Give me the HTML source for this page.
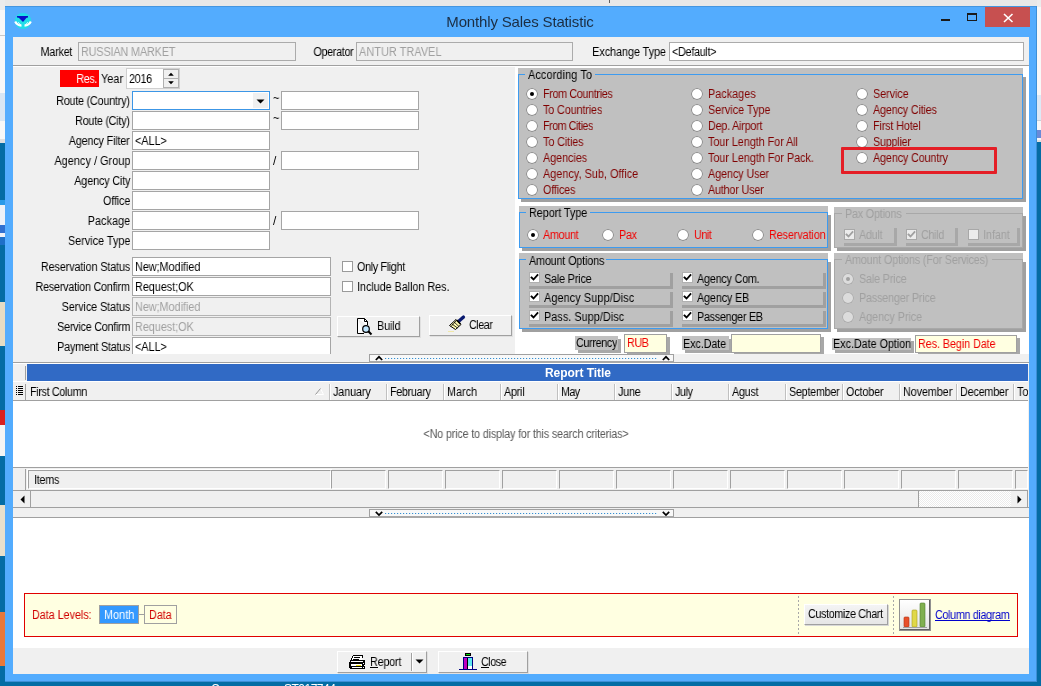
<!DOCTYPE html>
<html><head><meta charset="utf-8"><style>
html,body{margin:0;padding:0;width:1041px;height:686px;overflow:hidden;position:relative;background:#046ca4}
.a{position:absolute;box-sizing:border-box}
.t{position:absolute;white-space:pre;font-family:"Liberation Sans",sans-serif;will-change:transform}
svg.a{overflow:visible}
</style></head><body>
<div class="a" style="left:0;top:0;width:1041px;height:686px;background:#046ca4"></div>
<div class="a" style="left:0px;top:0px;width:1041px;height:6px;background:#e8e8e8;"></div>
<div class="a" style="left:609px;top:0px;width:1px;height:3px;background:#606060;"></div>
<div class="a" style="left:0px;top:0px;width:5px;height:10px;background:#ececec;"></div>
<div class="a" style="left:0px;top:10px;width:5px;height:26px;background:#f8f8f8;"></div>
<div class="a" style="left:0px;top:35px;width:5px;height:1px;background:#c8c8c8;"></div>
<div class="a" style="left:0px;top:36px;width:5px;height:57px;background:#f8f8f8;"></div>
<div class="a" style="left:0px;top:93px;width:5px;height:28px;background:#d8e6f4;"></div>
<div class="a" style="left:0px;top:121px;width:5px;height:19px;background:#f8f8f8;"></div>
<div class="a" style="left:0px;top:139px;width:5px;height:4px;background:#e0e0e0;"></div>
<div class="a" style="left:0px;top:200px;width:5px;height:5px;background:#2a9ae8;"></div>
<div class="a" style="left:0px;top:205px;width:5px;height:32px;background:#eef2f8;"></div>
<div class="a" style="left:0px;top:225px;width:5px;height:8px;background:#3070d0;"></div>
<div class="a" style="left:0px;top:237px;width:5px;height:8px;background:#1e70c8;"></div>
<div class="a" style="left:0px;top:302px;width:5px;height:44px;background:#e6dcc4;"></div>
<div class="a" style="left:0px;top:410px;width:5px;height:15px;background:#d82020;"></div>
<div class="a" style="left:0px;top:425px;width:5px;height:31px;background:#f4f4f4;"></div>
<div class="a" style="left:0px;top:505px;width:5px;height:51px;background:#e8e0cc;"></div>
<div class="a" style="left:0px;top:612px;width:5px;height:54px;background:#e8783a;"></div>
<div class="a" style="left:1037px;top:0px;width:4px;height:7px;background:#ececec;"></div>
<div class="a" style="left:1037px;top:7px;width:4px;height:135px;background:#f8f8f8;"></div>
<div class="a" style="left:1037px;top:95px;width:4px;height:25px;background:#dde9f5;"></div>
<div class="a" style="left:1037px;top:120px;width:4px;height:1px;background:#c8d0d8;"></div>
<div class="a" style="left:1037px;top:130px;width:4px;height:8px;background:#6a8ad8;"></div>
<div class="a" style="left:1037px;top:140px;width:4px;height:2px;background:#e0e0e0;"></div>
<div class="a" style="left:5px;top:6px;width:1032px;height:676px;background:#53acfe;"></div>
<div class="a" style="left:5px;top:681px;width:1032px;height:1px;background:#3d8fd6;"></div>
<div class="a" style="left:5px;top:6px;width:1032px;height:1px;background:#4496e0;"></div>
<div class="a" style="left:1036px;top:6px;width:1px;height:676px;background:#3d8fd6;"></div>
<div class="a" style="left:13px;top:37px;width:1016px;height:637px;background:#f0f0f0;"></div>
<svg class="a" style="left:10px;top:8px" width="26" height="26" viewBox="0 0 26 26">
<ellipse cx="13" cy="13" rx="8.2" ry="8" fill="#22dde8"/>
<path d="M8 14 L11 17 M18 14 L15 17" stroke="#b8f2ff" stroke-width="1"/>
<path d="M5.2 13.5 Q7 17.3 11.5 17.6 M20.8 13.5 Q19 17.3 14.5 17.6" stroke="#fff" stroke-width="2.2" fill="none"/>
<polygon points="7,8 18,8 13,14" fill="#0a12c8"/>
<rect x="7" y="8" width="11" height="1.6" fill="#0a12c8"/>
</svg>
<div class="t" style="top:13px;font-size:15px;line-height:18px;color:#1b2d42;letter-spacing:-0.154px;left:220px;width:600px;text-align:center;">Monthly Sales Statistic</div>
<div class="a" style="left:941px;top:19px;width:9px;height:2px;background:#1a1a1a;"></div>
<div class="a" style="left:967px;top:13px;width:10px;height:8px;box-sizing:border-box;border:1px solid #1a1a1a;border-top-width:2px"></div>
<div class="a" style="left:985px;top:7px;width:45px;height:20px;background:#c75050;"></div>
<svg class="a" style="left:1003px;top:13px" width="11" height="10" viewBox="0 0 11 10"><path d="M1 1 L9.5 9 M9.5 1 L1 9" stroke="#fff" stroke-width="1.6"/></svg>
<div class="t" style="top:46px;font-size:12px;line-height:13px;color:#000;letter-spacing:-0.246px;right:969px;transform:scaleX(0.9);transform-origin:100% 0;">Market</div>
<div class="a" style="left:78px;top:42px;width:218px;height:19px;background:#f0f0f0;border:1px solid #ababab;"></div>
<div class="t" style="top:46px;font-size:12px;line-height:13px;color:#a0a0a0;letter-spacing:-0.138px;left:81px;transform:scaleX(0.9);transform-origin:0 0;">RUSSIAN MARKET</div>
<div class="t" style="top:46px;font-size:12px;line-height:13px;color:#000;letter-spacing:-0.385px;right:688px;transform:scaleX(0.9);transform-origin:100% 0;">Operator</div>
<div class="a" style="left:356px;top:42px;width:217px;height:19px;background:#f0f0f0;border:1px solid #ababab;"></div>
<div class="t" style="top:46px;font-size:12px;line-height:13px;color:#a0a0a0;letter-spacing:0.131px;left:359px;transform:scaleX(0.9);transform-origin:0 0;">ANTUR TRAVEL</div>
<div class="t" style="top:46px;font-size:12px;line-height:13px;color:#000;letter-spacing:-0.046px;right:375px;transform:scaleX(0.9);transform-origin:100% 0;">Exchange Type</div>
<div class="a" style="left:669px;top:42px;width:355px;height:19px;background:#fff;border:1px solid #ababab;"></div>
<div class="t" style="top:46px;font-size:12px;line-height:13px;color:#000;letter-spacing:-0.323px;left:672px;transform:scaleX(0.9);transform-origin:0 0;">&lt;Default&gt;</div>
<div class="a" style="left:13px;top:65px;width:1016px;height:1px;background:#a0a0a0;"></div>
<div class="a" style="left:13px;top:66px;width:1016px;height:1px;background:#ffffff;"></div>
<div class="a" style="left:515px;top:67px;width:514px;height:287px;background:#ffffff;"></div>
<div class="a" style="left:60px;top:70px;width:39px;height:17px;background:#ff0000;"></div>
<div class="t" style="top:73px;font-size:12px;line-height:13px;color:#fff;letter-spacing:-0.428px;right:944px;transform:scaleX(0.9);transform-origin:100% 0;">Res.</div>
<div class="t" style="top:73px;font-size:12px;line-height:13px;color:#000;letter-spacing:0.065px;left:101px;transform:scaleX(0.9);transform-origin:0 0;">Year</div>
<div class="a" style="left:126px;top:68px;width:54px;height:21px;background:#fff;border:1px solid #d0d0d0;"></div>
<div class="t" style="top:73px;font-size:12px;line-height:13px;color:#000;letter-spacing:-0.303px;left:129px;transform:scaleX(0.9);transform-origin:0 0;">2016</div>
<div class="a" style="left:163px;top:69px;width:16px;height:10px;background:#f0f0f0;border:1px solid #b0b0b0;"></div>
<div class="a" style="left:163px;top:78px;width:16px;height:10px;background:#f0f0f0;border:1px solid #b0b0b0;"></div>
<svg class="a" style="left:163px;top:69px" width="16" height="19" viewBox="0 0 17 19"><path d="M5.5 6.5 L8.5 3.5 L11.5 6.5 Z M5.5 12.5 L8.5 15.5 L11.5 12.5 Z" fill="#000"/></svg>
<div class="t" style="top:95px;font-size:12px;line-height:13px;color:#000;letter-spacing:-0.249px;right:911px;transform:scaleX(0.9);transform-origin:100% 0;">Route (Country)</div>
<div class="a" style="left:132px;top:91px;width:138px;height:19px;background:#fff;border:1px solid #3c96e6;"></div>
<div class="a" style="left:253px;top:93px;width:15px;height:15px;background:#f0f0f0;"></div>
<svg class="a" style="left:256px;top:99px" width="9" height="6" viewBox="0 0 9 6"><path d="M0.5 0.5 L8.5 0.5 L4.5 4.5 Z" fill="#000"/></svg>
<div class="t" style="top:92px;font-size:12px;line-height:13px;color:#000;letter-spacing:0.000px;left:273px;transform:scaleX(0.9);transform-origin:0 0;">~</div>
<div class="a" style="left:281px;top:91px;width:138px;height:19px;background:#fff;border:1px solid #a5a5a5;"></div>
<div class="t" style="top:115px;font-size:12px;line-height:13px;color:#000;letter-spacing:-0.284px;right:911px;transform:scaleX(0.9);transform-origin:100% 0;">Route (City)</div>
<div class="a" style="left:132px;top:111px;width:138px;height:19px;background:#fff;border:1px solid #a5a5a5;"></div>
<div class="t" style="top:112px;font-size:12px;line-height:13px;color:#000;letter-spacing:0.000px;left:273px;transform:scaleX(0.9);transform-origin:0 0;">~</div>
<div class="a" style="left:281px;top:111px;width:138px;height:19px;background:#fff;border:1px solid #a5a5a5;"></div>
<div class="t" style="top:135px;font-size:12px;line-height:13px;color:#000;letter-spacing:-0.188px;right:911px;transform:scaleX(0.9);transform-origin:100% 0;">Agency Filter</div>
<div class="a" style="left:132px;top:131px;width:138px;height:19px;background:#fff;border:1px solid #a5a5a5;"></div>
<div class="t" style="top:155px;font-size:12px;line-height:13px;color:#000;letter-spacing:0.074px;right:911px;transform:scaleX(0.9);transform-origin:100% 0;">Agency / Group</div>
<div class="a" style="left:132px;top:151px;width:138px;height:19px;background:#fff;border:1px solid #a5a5a5;"></div>
<div class="t" style="top:155px;font-size:12px;line-height:13px;color:#000;letter-spacing:0.000px;left:273px;transform:scaleX(0.9);transform-origin:0 0;">/</div>
<div class="a" style="left:281px;top:151px;width:138px;height:19px;background:#fff;border:1px solid #a5a5a5;"></div>
<div class="t" style="top:175px;font-size:12px;line-height:13px;color:#000;letter-spacing:-0.147px;right:911px;transform:scaleX(0.9);transform-origin:100% 0;">Agency City</div>
<div class="a" style="left:132px;top:171px;width:138px;height:19px;background:#fff;border:1px solid #a5a5a5;"></div>
<div class="t" style="top:195px;font-size:12px;line-height:13px;color:#000;letter-spacing:-0.157px;right:911px;transform:scaleX(0.9);transform-origin:100% 0;">Office</div>
<div class="a" style="left:132px;top:191px;width:138px;height:19px;background:#fff;border:1px solid #a5a5a5;"></div>
<div class="t" style="top:215px;font-size:12px;line-height:13px;color:#000;letter-spacing:0.088px;right:911px;transform:scaleX(0.9);transform-origin:100% 0;">Package</div>
<div class="a" style="left:132px;top:211px;width:138px;height:19px;background:#fff;border:1px solid #a5a5a5;"></div>
<div class="t" style="top:215px;font-size:12px;line-height:13px;color:#000;letter-spacing:0.000px;left:273px;transform:scaleX(0.9);transform-origin:0 0;">/</div>
<div class="a" style="left:281px;top:211px;width:138px;height:19px;background:#fff;border:1px solid #a5a5a5;"></div>
<div class="t" style="top:235px;font-size:12px;line-height:13px;color:#000;letter-spacing:0.028px;right:911px;transform:scaleX(0.9);transform-origin:100% 0;">Service Type</div>
<div class="a" style="left:132px;top:231px;width:138px;height:19px;background:#fff;border:1px solid #a5a5a5;"></div>
<div class="t" style="top:135px;font-size:12px;line-height:13px;color:#000;letter-spacing:0.000px;left:135px;transform:scaleX(0.9);transform-origin:0 0;">&lt;ALL&gt;</div>
<div class="t" style="top:261px;font-size:12px;line-height:13px;color:#000;letter-spacing:-0.121px;right:911px;transform:scaleX(0.9);transform-origin:100% 0;">Reservation Status</div>
<div class="a" style="left:132px;top:257px;width:199px;height:19px;background:#fff;border:1px solid #a5a5a5;"></div>
<div class="t" style="top:261px;font-size:12px;line-height:13px;color:#000;letter-spacing:0.000px;left:135px;transform:scaleX(0.9);transform-origin:0 0;">New;Modified</div>
<div class="t" style="top:281px;font-size:12px;line-height:13px;color:#000;letter-spacing:-0.243px;right:911px;transform:scaleX(0.9);transform-origin:100% 0;">Reservation Confirm</div>
<div class="a" style="left:132px;top:277px;width:199px;height:19px;background:#fff;border:1px solid #a5a5a5;"></div>
<div class="t" style="top:281px;font-size:12px;line-height:13px;color:#000;letter-spacing:0.000px;left:135px;transform:scaleX(0.9);transform-origin:0 0;">Request;OK</div>
<div class="t" style="top:301px;font-size:12px;line-height:13px;color:#000;letter-spacing:-0.088px;right:911px;transform:scaleX(0.9);transform-origin:100% 0;">Service Status</div>
<div class="a" style="left:132px;top:297px;width:199px;height:19px;background:#f0f0f0;border:1px solid #b4b4b4;"></div>
<div class="t" style="top:301px;font-size:12px;line-height:13px;color:#a0a0a0;letter-spacing:0.000px;left:135px;transform:scaleX(0.9);transform-origin:0 0;">New;Modified</div>
<div class="t" style="top:321px;font-size:12px;line-height:13px;color:#000;letter-spacing:-0.272px;right:911px;transform:scaleX(0.9);transform-origin:100% 0;">Service Confirm</div>
<div class="a" style="left:132px;top:317px;width:199px;height:19px;background:#f0f0f0;border:1px solid #b4b4b4;"></div>
<div class="t" style="top:321px;font-size:12px;line-height:13px;color:#a0a0a0;letter-spacing:0.000px;left:135px;transform:scaleX(0.9);transform-origin:0 0;">Request;OK</div>
<div class="t" style="top:341px;font-size:12px;line-height:13px;color:#000;letter-spacing:-0.243px;right:911px;transform:scaleX(0.9);transform-origin:100% 0;">Payment Status</div>
<div class="a" style="left:132px;top:337px;width:199px;height:19px;background:#fff;border:1px solid #a5a5a5;"></div>
<div class="t" style="top:341px;font-size:12px;line-height:13px;color:#000;letter-spacing:0.000px;left:135px;transform:scaleX(0.9);transform-origin:0 0;">&lt;ALL&gt;</div>
<div class="a" style="left:13px;top:354px;width:502px;height:8px;background:#f0f0f0;"></div>
<div class="a" style="left:342px;top:261px;width:11px;height:11px;background:#fff;box-sizing:border-box;border:1px solid #9a9a9a"></div>
<div class="t" style="top:261px;font-size:12px;line-height:13px;color:#000;letter-spacing:-0.385px;left:357px;transform:scaleX(0.9);transform-origin:0 0;">Only Flight</div>
<div class="a" style="left:342px;top:281px;width:11px;height:11px;background:#fff;box-sizing:border-box;border:1px solid #9a9a9a"></div>
<div class="t" style="top:281px;font-size:12px;line-height:13px;color:#000;letter-spacing:-0.037px;left:357px;transform:scaleX(0.9);transform-origin:0 0;">Include Ballon Res.</div>
<div class="a" style="left:337px;top:316px;width:83px;height:21px;box-sizing:border-box;background:#f0f0f0;border-top:1px solid #fff;border-left:1px solid #fff;border-right:1px solid #a0a0a0;border-bottom:1px solid #a0a0a0;box-shadow:1px 1px 0 #e0e0e0"></div>
<div class="a" style="left:429px;top:315px;width:83px;height:21px;box-sizing:border-box;background:#f0f0f0;border-top:1px solid #fff;border-left:1px solid #fff;border-right:1px solid #a0a0a0;border-bottom:1px solid #a0a0a0;box-shadow:1px 1px 0 #e0e0e0"></div>
<svg class="a" style="left:356px;top:317px" width="18" height="19" viewBox="0 0 18 19">
<path d="M1.5 1.5 L8.5 1.5 L11.5 4.5 L11.5 8 M1.5 1.5 L1.5 16.5 L8 16.5" stroke="#000" fill="#fff" stroke-width="1"/>
<path d="M8.5 1.5 L8.5 4.5 L11.5 4.5" stroke="#000" fill="none"/>
<circle cx="10" cy="12" r="3.3" fill="#bfe6ff" stroke="#000" stroke-width="1.2"/>
<path d="M12.3 14.3 L15.5 17.5" stroke="#000" stroke-width="2"/>
</svg>
<div class="t" style="top:320px;font-size:12px;line-height:13px;color:#000;letter-spacing:-0.114px;left:377px;transform:scaleX(0.9);transform-origin:0 0;">Build</div>
<svg class="a" style="left:447px;top:316px" width="19" height="17" viewBox="0 0 19 17">
<path d="M12 5 L16.5 1" stroke="#0a1a70" stroke-width="3.2" stroke-linecap="round"/>
<path d="M9 3.5 L14 8.5 L8.5 13.5 L2.5 9.5 Z" fill="#fffbb0" stroke="#000" stroke-width="1"/>
<path d="M5 8 L10.5 12 M7 6 L12 10.5 M4 10.5 L9 5" stroke="#000" stroke-width="0.8"/>
<path d="M9.5 4 L13.5 8" stroke="#000" stroke-width="1.6"/>
<path d="M1.5 15.5 L7 15.5" stroke="#f0e060" stroke-width="1" stroke-dasharray="1 1"/>
</svg>
<div class="t" style="top:319px;font-size:12px;line-height:13px;color:#000;letter-spacing:-0.573px;left:469px;transform:scaleX(0.9);transform-origin:0 0;">Clear</div>
<div class="a" style="left:13px;top:362px;width:1016px;height:1px;background:#a0a0a0;"></div>
<div class="a" style="left:13px;top:363px;width:1016px;height:1px;background:#ffffff;"></div>
<div class="a" style="left:369px;top:354px;width:305px;height:9px;box-sizing:border-box;background:#f8f8f8;border-top:1px solid #a0a0a0;border-left:1px solid #a0a0a0;border-right:1px solid #a0a0a0;border-bottom:2px solid #a8a8a8"></div>
<svg class="a" style="left:375px;top:356px" width="8" height="5" viewBox="0 0 8 5"><path d="M0.8 4 L4 0.8 L7.2 4" stroke="#000" stroke-width="1.7" fill="none"/></svg>
<svg class="a" style="left:662px;top:356px" width="8" height="5" viewBox="0 0 8 5"><path d="M0.8 4 L4 0.8 L7.2 4" stroke="#000" stroke-width="1.7" fill="none"/></svg>
<div class="a" style="left:385px;top:358px;width:272px;height:1px;background-image:repeating-linear-gradient(90deg,#3c88d0 0 1px,#c8f0f8 1px 2px,transparent 2px 3px)"></div>
<div class="a" style="left:521px;top:77px;width:505px;height:125px;background:#a0a0a0;"></div>
<div class="a" style="left:518px;top:68px;width:505px;height:131px;background:#c0c0c0;"></div>
<div class="a" style="left:518px;top:74px;width:505px;height:1px;background:#3d9bf0;"></div>
<div class="a" style="left:518px;top:74px;width:1px;height:125px;background:#3d9bf0;"></div>
<div class="a" style="left:1022px;top:74px;width:1px;height:125px;background:#3d9bf0;"></div>
<div class="a" style="left:518px;top:198px;width:505px;height:1px;background:#3d9bf0;"></div>
<div class="a" style="left:525px;top:74px;width:70px;height:1px;background:#c0c0c0;"></div>
<div class="t" style="top:69px;font-size:12px;line-height:13px;color:#000;letter-spacing:0.179px;left:528px;transform:scaleX(0.9);transform-origin:0 0;">According To</div>
<div class="a" style="left:526px;top:88px;width:12px;height:12px;border-radius:50%;background:#fff;box-shadow:inset 0 0 0 1px #8c8c8c;"></div>
<div class="a" style="left:530px;top:92px;width:4px;height:4px;border-radius:50%;background:#000"></div>
<div class="t" style="top:88px;font-size:12px;line-height:13px;color:#800000;letter-spacing:-0.403px;left:543px;transform:scaleX(0.9);transform-origin:0 0;">From Countries</div>
<div class="a" style="left:526px;top:104px;width:12px;height:12px;border-radius:50%;background:#fff;box-shadow:inset 0 0 0 1px #8c8c8c;"></div>
<div class="t" style="top:104px;font-size:12px;line-height:13px;color:#800000;letter-spacing:-0.134px;left:543px;transform:scaleX(0.9);transform-origin:0 0;">To Countries</div>
<div class="a" style="left:526px;top:120px;width:12px;height:12px;border-radius:50%;background:#fff;box-shadow:inset 0 0 0 1px #8c8c8c;"></div>
<div class="t" style="top:120px;font-size:12px;line-height:13px;color:#800000;letter-spacing:-0.545px;left:543px;transform:scaleX(0.9);transform-origin:0 0;">From Cities</div>
<div class="a" style="left:526px;top:136px;width:12px;height:12px;border-radius:50%;background:#fff;box-shadow:inset 0 0 0 1px #8c8c8c;"></div>
<div class="t" style="top:136px;font-size:12px;line-height:13px;color:#800000;letter-spacing:-0.113px;left:543px;transform:scaleX(0.9);transform-origin:0 0;">To Cities</div>
<div class="a" style="left:526px;top:152px;width:12px;height:12px;border-radius:50%;background:#fff;box-shadow:inset 0 0 0 1px #8c8c8c;"></div>
<div class="t" style="top:152px;font-size:12px;line-height:13px;color:#800000;letter-spacing:-0.052px;left:543px;transform:scaleX(0.9);transform-origin:0 0;">Agencies</div>
<div class="a" style="left:526px;top:168px;width:12px;height:12px;border-radius:50%;background:#fff;box-shadow:inset 0 0 0 1px #8c8c8c;"></div>
<div class="t" style="top:168px;font-size:12px;line-height:13px;color:#800000;letter-spacing:0.047px;left:543px;transform:scaleX(0.9);transform-origin:0 0;">Agency, Sub, Office</div>
<div class="a" style="left:526px;top:184px;width:12px;height:12px;border-radius:50%;background:#fff;box-shadow:inset 0 0 0 1px #8c8c8c;"></div>
<div class="t" style="top:184px;font-size:12px;line-height:13px;color:#800000;letter-spacing:-0.169px;left:543px;transform:scaleX(0.9);transform-origin:0 0;">Offices</div>
<div class="a" style="left:691px;top:88px;width:12px;height:12px;border-radius:50%;background:#fff;box-shadow:inset 0 0 0 1px #8c8c8c;"></div>
<div class="t" style="top:88px;font-size:12px;line-height:13px;color:#800000;letter-spacing:0.027px;left:708px;transform:scaleX(0.9);transform-origin:0 0;">Packages</div>
<div class="a" style="left:691px;top:104px;width:12px;height:12px;border-radius:50%;background:#fff;box-shadow:inset 0 0 0 1px #8c8c8c;"></div>
<div class="t" style="top:104px;font-size:12px;line-height:13px;color:#800000;letter-spacing:0.028px;left:708px;transform:scaleX(0.9);transform-origin:0 0;">Service Type</div>
<div class="a" style="left:691px;top:120px;width:12px;height:12px;border-radius:50%;background:#fff;box-shadow:inset 0 0 0 1px #8c8c8c;"></div>
<div class="t" style="top:120px;font-size:12px;line-height:13px;color:#800000;letter-spacing:-0.255px;left:708px;transform:scaleX(0.9);transform-origin:0 0;">Dep. Airport</div>
<div class="a" style="left:691px;top:136px;width:12px;height:12px;border-radius:50%;background:#fff;box-shadow:inset 0 0 0 1px #8c8c8c;"></div>
<div class="t" style="top:136px;font-size:12px;line-height:13px;color:#800000;letter-spacing:-0.040px;left:708px;transform:scaleX(0.9);transform-origin:0 0;">Tour Length For All</div>
<div class="a" style="left:691px;top:152px;width:12px;height:12px;border-radius:50%;background:#fff;box-shadow:inset 0 0 0 1px #8c8c8c;"></div>
<div class="t" style="top:152px;font-size:12px;line-height:13px;color:#800000;letter-spacing:-0.025px;left:708px;transform:scaleX(0.9);transform-origin:0 0;">Tour Length For Pack.</div>
<div class="a" style="left:691px;top:168px;width:12px;height:12px;border-radius:50%;background:#fff;box-shadow:inset 0 0 0 1px #8c8c8c;"></div>
<div class="t" style="top:168px;font-size:12px;line-height:13px;color:#800000;letter-spacing:-0.092px;left:708px;transform:scaleX(0.9);transform-origin:0 0;">Agency User</div>
<div class="a" style="left:691px;top:184px;width:12px;height:12px;border-radius:50%;background:#fff;box-shadow:inset 0 0 0 1px #8c8c8c;"></div>
<div class="t" style="top:184px;font-size:12px;line-height:13px;color:#800000;letter-spacing:-0.214px;left:708px;transform:scaleX(0.9);transform-origin:0 0;">Author User</div>
<div class="a" style="left:856px;top:88px;width:12px;height:12px;border-radius:50%;background:#fff;box-shadow:inset 0 0 0 1px #8c8c8c;"></div>
<div class="t" style="top:88px;font-size:12px;line-height:13px;color:#800000;letter-spacing:-0.057px;left:873px;transform:scaleX(0.9);transform-origin:0 0;">Service</div>
<div class="a" style="left:856px;top:104px;width:12px;height:12px;border-radius:50%;background:#fff;box-shadow:inset 0 0 0 1px #8c8c8c;"></div>
<div class="t" style="top:104px;font-size:12px;line-height:13px;color:#800000;letter-spacing:-0.197px;left:873px;transform:scaleX(0.9);transform-origin:0 0;">Agency Cities</div>
<div class="a" style="left:856px;top:120px;width:12px;height:12px;border-radius:50%;background:#fff;box-shadow:inset 0 0 0 1px #8c8c8c;"></div>
<div class="t" style="top:120px;font-size:12px;line-height:13px;color:#800000;letter-spacing:-0.167px;left:873px;transform:scaleX(0.9);transform-origin:0 0;">First Hotel</div>
<div class="a" style="left:856px;top:136px;width:12px;height:12px;border-radius:50%;background:#fff;box-shadow:inset 0 0 0 1px #8c8c8c;"></div>
<div class="t" style="top:136px;font-size:12px;line-height:13px;color:#800000;letter-spacing:-0.258px;left:873px;transform:scaleX(0.9);transform-origin:0 0;">Supplier</div>
<div class="a" style="left:856px;top:152px;width:12px;height:12px;border-radius:50%;background:#fff;box-shadow:inset 0 0 0 1px #8c8c8c;"></div>
<div class="t" style="top:152px;font-size:12px;line-height:13px;color:#800000;letter-spacing:-0.157px;left:873px;transform:scaleX(0.9);transform-origin:0 0;">Agency Country</div>
<div class="a" style="left:841px;top:147px;width:156px;height:27px;box-sizing:border-box;border:3px solid #e41e26;border-radius:1px"></div>
<div class="a" style="left:522px;top:215px;width:309px;height:36px;background:#a0a0a0;"></div>
<div class="a" style="left:519px;top:206px;width:309px;height:42px;background:#c0c0c0;"></div>
<div class="a" style="left:519px;top:212px;width:309px;height:1px;background:#3d9bf0;"></div>
<div class="a" style="left:519px;top:212px;width:1px;height:36px;background:#3d9bf0;"></div>
<div class="a" style="left:827px;top:212px;width:1px;height:36px;background:#3d9bf0;"></div>
<div class="a" style="left:519px;top:247px;width:309px;height:1px;background:#3d9bf0;"></div>
<div class="a" style="left:526px;top:212px;width:64px;height:1px;background:#c0c0c0;"></div>
<div class="t" style="top:207px;font-size:12px;line-height:13px;color:#000;letter-spacing:-0.042px;left:529px;transform:scaleX(0.9);transform-origin:0 0;">Report Type</div>
<div class="a" style="left:527px;top:229px;width:12px;height:12px;border-radius:50%;background:#fff;box-shadow:inset 0 0 0 1px #8c8c8c;"></div>
<div class="a" style="left:531px;top:233px;width:4px;height:4px;border-radius:50%;background:#000"></div>
<div class="t" style="top:229px;font-size:12px;line-height:13px;color:#f00000;letter-spacing:-0.349px;left:543px;transform:scaleX(0.9);transform-origin:0 0;">Amount</div>
<div class="a" style="left:602px;top:229px;width:12px;height:12px;border-radius:50%;background:#fff;box-shadow:inset 0 0 0 1px #8c8c8c;"></div>
<div class="t" style="top:229px;font-size:12px;line-height:13px;color:#f00000;letter-spacing:-0.339px;left:619px;transform:scaleX(0.9);transform-origin:0 0;">Pax</div>
<div class="a" style="left:677px;top:229px;width:12px;height:12px;border-radius:50%;background:#fff;box-shadow:inset 0 0 0 1px #8c8c8c;"></div>
<div class="t" style="top:229px;font-size:12px;line-height:13px;color:#f00000;letter-spacing:-0.483px;left:694px;transform:scaleX(0.9);transform-origin:0 0;">Unit</div>
<div class="a" style="left:752px;top:229px;width:12px;height:12px;border-radius:50%;background:#fff;box-shadow:inset 0 0 0 1px #8c8c8c;"></div>
<div class="t" style="top:229px;font-size:12px;line-height:13px;color:#f00000;letter-spacing:-0.114px;left:769px;transform:scaleX(0.9);transform-origin:0 0;">Reservation</div>
<div class="a" style="left:837px;top:216px;width:189px;height:35px;background:#a0a0a0;"></div>
<div class="a" style="left:834px;top:207px;width:189px;height:41px;background:#c0c0c0;"></div>
<div class="a" style="left:834px;top:213px;width:189px;height:1px;background:#a8a8a8;"></div>
<div class="a" style="left:834px;top:213px;width:1px;height:35px;background:#a8a8a8;"></div>
<div class="a" style="left:1022px;top:213px;width:1px;height:35px;background:#a8a8a8;"></div>
<div class="a" style="left:834px;top:247px;width:189px;height:1px;background:#a8a8a8;"></div>
<div class="a" style="left:842px;top:213px;width:64px;height:1px;background:#c0c0c0;"></div>
<div class="t" style="top:208px;font-size:12px;line-height:13px;color:#a0a0a0;letter-spacing:-0.237px;left:845px;transform:scaleX(0.9);transform-origin:0 0;">Pax Options</div>
<div class="a" style="left:844px;top:243px;width:53px;height:3px;background:#a8a8a8;"></div>
<div class="a" style="left:894px;top:228px;width:3px;height:18px;background:#a8a8a8;"></div>
<div class="a" style="left:844px;top:229px;width:11px;height:11px;background:#ececec;box-sizing:border-box;border:1px solid #a8a8a8"></div>
<svg class="a" style="left:844px;top:229px" width="11" height="11" viewBox="0 0 11 11"><path d="M2.5 5.5 L4.5 7.5 L8.5 3" stroke="#a0a0a0" stroke-width="1.8" fill="none" stroke-linecap="square"/></svg>
<div class="t" style="top:229px;font-size:12px;line-height:13px;color:#a0a0a0;letter-spacing:-0.338px;left:859px;transform:scaleX(0.9);transform-origin:0 0;">Adult</div>
<div class="a" style="left:906px;top:243px;width:52px;height:3px;background:#a8a8a8;"></div>
<div class="a" style="left:955px;top:228px;width:3px;height:18px;background:#a8a8a8;"></div>
<div class="a" style="left:906px;top:229px;width:11px;height:11px;background:#ececec;box-sizing:border-box;border:1px solid #a8a8a8"></div>
<svg class="a" style="left:906px;top:229px" width="11" height="11" viewBox="0 0 11 11"><path d="M2.5 5.5 L4.5 7.5 L8.5 3" stroke="#a0a0a0" stroke-width="1.8" fill="none" stroke-linecap="square"/></svg>
<div class="t" style="top:229px;font-size:12px;line-height:13px;color:#a0a0a0;letter-spacing:-0.362px;left:921px;transform:scaleX(0.9);transform-origin:0 0;">Child</div>
<div class="a" style="left:968px;top:243px;width:52px;height:3px;background:#a8a8a8;"></div>
<div class="a" style="left:1017px;top:228px;width:3px;height:18px;background:#a8a8a8;"></div>
<div class="a" style="left:968px;top:229px;width:11px;height:11px;background:#ececec;box-sizing:border-box;border:1px solid #a8a8a8"></div>
<div class="t" style="top:229px;font-size:12px;line-height:13px;color:#a0a0a0;letter-spacing:-0.049px;left:983px;transform:scaleX(0.9);transform-origin:0 0;">Infant</div>
<div class="a" style="left:522px;top:262px;width:309px;height:70px;background:#a0a0a0;"></div>
<div class="a" style="left:519px;top:253px;width:309px;height:76px;background:#c0c0c0;"></div>
<div class="a" style="left:519px;top:259px;width:309px;height:1px;background:#3d9bf0;"></div>
<div class="a" style="left:519px;top:259px;width:1px;height:70px;background:#3d9bf0;"></div>
<div class="a" style="left:827px;top:259px;width:1px;height:70px;background:#3d9bf0;"></div>
<div class="a" style="left:519px;top:328px;width:309px;height:1px;background:#3d9bf0;"></div>
<div class="a" style="left:526px;top:259px;width:80px;height:1px;background:#c0c0c0;"></div>
<div class="t" style="top:255px;font-size:12px;line-height:13px;color:#000;letter-spacing:-0.183px;left:529px;transform:scaleX(0.9);transform-origin:0 0;">Amount Options</div>
<div class="a" style="left:529px;top:286px;width:144px;height:3px;background:#a0a0a0;"></div>
<div class="a" style="left:670px;top:273px;width:3px;height:16px;background:#a0a0a0;"></div>
<div class="a" style="left:529px;top:272px;width:11px;height:11px;background:#fff;box-sizing:border-box;border:1px solid #b0b0b0"></div>
<svg class="a" style="left:529px;top:272px" width="11" height="11" viewBox="0 0 11 11"><path d="M2.5 5.5 L4.5 7.5 L8.5 3" stroke="#000" stroke-width="1.8" fill="none" stroke-linecap="square"/></svg>
<div class="t" style="top:273px;font-size:12px;line-height:13px;color:#000;letter-spacing:-0.199px;left:544px;transform:scaleX(0.9);transform-origin:0 0;">Sale Price</div>
<div class="a" style="left:529px;top:305px;width:144px;height:3px;background:#a0a0a0;"></div>
<div class="a" style="left:670px;top:292px;width:3px;height:16px;background:#a0a0a0;"></div>
<div class="a" style="left:529px;top:291px;width:11px;height:11px;background:#fff;box-sizing:border-box;border:1px solid #b0b0b0"></div>
<svg class="a" style="left:529px;top:291px" width="11" height="11" viewBox="0 0 11 11"><path d="M2.5 5.5 L4.5 7.5 L8.5 3" stroke="#000" stroke-width="1.8" fill="none" stroke-linecap="square"/></svg>
<div class="t" style="top:292px;font-size:12px;line-height:13px;color:#000;letter-spacing:0.145px;left:544px;transform:scaleX(0.9);transform-origin:0 0;">Agency Supp/Disc</div>
<div class="a" style="left:529px;top:324px;width:144px;height:3px;background:#a0a0a0;"></div>
<div class="a" style="left:670px;top:311px;width:3px;height:16px;background:#a0a0a0;"></div>
<div class="a" style="left:529px;top:310px;width:11px;height:11px;background:#fff;box-sizing:border-box;border:1px solid #b0b0b0"></div>
<svg class="a" style="left:529px;top:310px" width="11" height="11" viewBox="0 0 11 11"><path d="M2.5 5.5 L4.5 7.5 L8.5 3" stroke="#000" stroke-width="1.8" fill="none" stroke-linecap="square"/></svg>
<div class="t" style="top:311px;font-size:12px;line-height:13px;color:#000;letter-spacing:0.069px;left:544px;transform:scaleX(0.9);transform-origin:0 0;">Pass. Supp/Disc</div>
<div class="a" style="left:682px;top:286px;width:144px;height:3px;background:#a0a0a0;"></div>
<div class="a" style="left:823px;top:273px;width:3px;height:16px;background:#a0a0a0;"></div>
<div class="a" style="left:682px;top:272px;width:11px;height:11px;background:#fff;box-sizing:border-box;border:1px solid #b0b0b0"></div>
<svg class="a" style="left:682px;top:272px" width="11" height="11" viewBox="0 0 11 11"><path d="M2.5 5.5 L4.5 7.5 L8.5 3" stroke="#000" stroke-width="1.8" fill="none" stroke-linecap="square"/></svg>
<div class="t" style="top:273px;font-size:12px;line-height:13px;color:#000;letter-spacing:-0.236px;left:697px;transform:scaleX(0.9);transform-origin:0 0;">Agency Com.</div>
<div class="a" style="left:682px;top:305px;width:144px;height:3px;background:#a0a0a0;"></div>
<div class="a" style="left:823px;top:292px;width:3px;height:16px;background:#a0a0a0;"></div>
<div class="a" style="left:682px;top:291px;width:11px;height:11px;background:#fff;box-sizing:border-box;border:1px solid #b0b0b0"></div>
<svg class="a" style="left:682px;top:291px" width="11" height="11" viewBox="0 0 11 11"><path d="M2.5 5.5 L4.5 7.5 L8.5 3" stroke="#000" stroke-width="1.8" fill="none" stroke-linecap="square"/></svg>
<div class="t" style="top:292px;font-size:12px;line-height:13px;color:#000;letter-spacing:-0.157px;left:697px;transform:scaleX(0.9);transform-origin:0 0;">Agency EB</div>
<div class="a" style="left:682px;top:324px;width:144px;height:3px;background:#a0a0a0;"></div>
<div class="a" style="left:823px;top:311px;width:3px;height:16px;background:#a0a0a0;"></div>
<div class="a" style="left:682px;top:310px;width:11px;height:11px;background:#fff;box-sizing:border-box;border:1px solid #b0b0b0"></div>
<svg class="a" style="left:682px;top:310px" width="11" height="11" viewBox="0 0 11 11"><path d="M2.5 5.5 L4.5 7.5 L8.5 3" stroke="#000" stroke-width="1.8" fill="none" stroke-linecap="square"/></svg>
<div class="t" style="top:311px;font-size:12px;line-height:13px;color:#000;letter-spacing:-0.307px;left:697px;transform:scaleX(0.9);transform-origin:0 0;">Passenger EB</div>
<div class="a" style="left:837px;top:262px;width:189px;height:70px;background:#a0a0a0;"></div>
<div class="a" style="left:834px;top:253px;width:189px;height:76px;background:#c0c0c0;"></div>
<div class="a" style="left:834px;top:259px;width:189px;height:1px;background:#a8a8a8;"></div>
<div class="a" style="left:834px;top:259px;width:1px;height:70px;background:#a8a8a8;"></div>
<div class="a" style="left:1022px;top:259px;width:1px;height:70px;background:#a8a8a8;"></div>
<div class="a" style="left:834px;top:328px;width:189px;height:1px;background:#a8a8a8;"></div>
<div class="a" style="left:842px;top:259px;width:150px;height:1px;background:#c0c0c0;"></div>
<div class="t" style="top:254px;font-size:12px;line-height:13px;color:#a0a0a0;letter-spacing:-0.192px;left:845px;transform:scaleX(0.9);transform-origin:0 0;">Amount Options (For Services)</div>
<div class="a" style="left:842px;top:273px;width:12px;height:12px;border-radius:50%;background:#dcdcdc;box-shadow:inset 0 0 0 1px #acacac;"></div>
<div class="a" style="left:846px;top:277px;width:4px;height:4px;border-radius:50%;background:#a0a0a0"></div>
<div class="t" style="top:273px;font-size:12px;line-height:13px;color:#a0a0a0;letter-spacing:-0.199px;left:859px;transform:scaleX(0.9);transform-origin:0 0;">Sale Price</div>
<div class="a" style="left:842px;top:292px;width:12px;height:12px;border-radius:50%;background:#dcdcdc;box-shadow:inset 0 0 0 1px #acacac;"></div>
<div class="t" style="top:292px;font-size:12px;line-height:13px;color:#a0a0a0;letter-spacing:-0.201px;left:859px;transform:scaleX(0.9);transform-origin:0 0;">Passenger Price</div>
<div class="a" style="left:842px;top:311px;width:12px;height:12px;border-radius:50%;background:#dcdcdc;box-shadow:inset 0 0 0 1px #acacac;"></div>
<div class="t" style="top:311px;font-size:12px;line-height:13px;color:#a0a0a0;letter-spacing:-0.053px;left:859px;transform:scaleX(0.9);transform-origin:0 0;">Agency Price</div>
<div class="a" style="left:578px;top:339px;width:43px;height:14px;background:#a8a8a8;"></div>
<div class="a" style="left:575px;top:336px;width:43px;height:14px;background:#c0c0c0;"></div>
<div class="t" style="top:337px;font-size:12px;line-height:13px;color:#000;letter-spacing:-0.399px;left:576px;transform:scaleX(0.9);transform-origin:0 0;">Currency</div>
<div class="a" style="left:627px;top:337px;width:43px;height:17px;background:#a8a8a8;"></div>
<div class="a" style="left:624px;top:334px;width:43px;height:19px;background:#ffffe1;border:1px solid #a0a0a0;"></div>
<div class="t" style="top:337px;font-size:12px;line-height:13px;color:#f00000;letter-spacing:-0.499px;left:627px;transform:scaleX(0.9);transform-origin:0 0;">RUB</div>
<div class="a" style="left:685px;top:339px;width:47px;height:14px;background:#a8a8a8;"></div>
<div class="a" style="left:682px;top:336px;width:47px;height:14px;background:#c0c0c0;"></div>
<div class="t" style="top:338px;font-size:12px;line-height:13px;color:#000;letter-spacing:-0.097px;left:683px;transform:scaleX(0.9);transform-origin:0 0;">Exc.Date</div>
<div class="a" style="left:734px;top:337px;width:90px;height:17px;background:#a8a8a8;"></div>
<div class="a" style="left:731px;top:334px;width:90px;height:19px;background:#ffffe1;border:1px solid #a0a0a0;"></div>
<div class="a" style="left:835px;top:341px;width:79px;height:12px;background:#a8a8a8;"></div>
<div class="a" style="left:832px;top:338px;width:79px;height:12px;background:#c0c0c0;"></div>
<div class="t" style="top:338px;font-size:12px;line-height:13px;color:#000;letter-spacing:-0.042px;left:833px;transform:scaleX(0.9);transform-origin:0 0;">Exc.Date Option</div>
<div class="a" style="left:918px;top:338px;width:102px;height:16px;background:#a8a8a8;"></div>
<div class="a" style="left:915px;top:335px;width:102px;height:18px;background:#ffffe1;border:1px solid #a0a0a0;"></div>
<div class="t" style="top:338px;font-size:12px;line-height:13px;color:#f00000;letter-spacing:-0.082px;left:918px;transform:scaleX(0.9);transform-origin:0 0;">Res. Begin Date</div>
<div class="a" style="left:13px;top:364px;width:1015px;height:17px;background:#f0f0f0;"></div>
<div class="a" style="left:27px;top:364px;width:1001px;height:17px;background:#316ac5;"></div>
<div class="a" style="left:25px;top:366px;width:1px;height:14px;background:#a0a0a0;"></div>
<div class="t" style="top:366px;font-size:12px;line-height:14px;color:#fff;letter-spacing:-0.034px;font-weight:bold;left:278px;width:600px;text-align:center;">Report Title</div>
<div class="a" style="left:13px;top:381px;width:1015px;height:1px;background:#ffffff;"></div>
<div class="a" style="left:13px;top:382px;width:1015px;height:18px;background:#f0f0f0;"></div>
<div class="a" style="left:13px;top:400px;width:1015px;height:1px;background:#a0a0a0;"></div>
<div class="a" style="left:25px;top:384px;width:1px;height:16px;background:#a0a0a0;"></div>
<svg class="a" style="left:16px;top:386px" width="8" height="11" viewBox="0 0 8 11"><path d="M0 0.5 H1 M0 2.5 H1 M0 4.5 H1 M0 6.5 H1 M0 8.5 H1 M2 0.5 H7 M2 2.5 H7 M2 4.5 H7 M2 6.5 H7 M2 8.5 H7" stroke="#000" stroke-width="1"/></svg>
<div class="t" style="top:386px;font-size:12px;line-height:13px;color:#000;letter-spacing:-0.394px;left:30px;transform:scaleX(0.9);transform-origin:0 0;">First Column</div>
<svg class="a" style="left:315px;top:388px" width="9" height="8" viewBox="0 0 9 8"><path d="M5.5 0.5 L8.5 6.5 L0.5 6.5 Z" fill="none" stroke="#fff" stroke-width="1"/><path d="M5.5 0.5 L0.5 6.5" stroke="#909090" stroke-width="1"/></svg>
<div class="a" style="left:329px;top:384px;width:1px;height:16px;background:#c0c0c0;"></div>
<div class="a" style="left:330px;top:384px;width:1px;height:16px;background:#ffffff;"></div>
<div class="t" style="top:386px;font-size:12px;line-height:13px;color:#000;letter-spacing:-0.134px;left:333px;transform:scaleX(0.9);transform-origin:0 0;">January</div>
<div class="a" style="left:386px;top:384px;width:1px;height:16px;background:#c0c0c0;"></div>
<div class="a" style="left:387px;top:384px;width:1px;height:16px;background:#ffffff;"></div>
<div class="t" style="top:386px;font-size:12px;line-height:13px;color:#000;letter-spacing:-0.352px;left:390px;transform:scaleX(0.9);transform-origin:0 0;">February</div>
<div class="a" style="left:443px;top:384px;width:1px;height:16px;background:#c0c0c0;"></div>
<div class="a" style="left:444px;top:384px;width:1px;height:16px;background:#ffffff;"></div>
<div class="t" style="top:386px;font-size:12px;line-height:13px;color:#000;letter-spacing:0.028px;left:447px;transform:scaleX(0.9);transform-origin:0 0;">March</div>
<div class="a" style="left:500px;top:384px;width:1px;height:16px;background:#c0c0c0;"></div>
<div class="a" style="left:501px;top:384px;width:1px;height:16px;background:#ffffff;"></div>
<div class="t" style="top:386px;font-size:12px;line-height:13px;color:#000;letter-spacing:-0.279px;left:504px;transform:scaleX(0.9);transform-origin:0 0;">April</div>
<div class="a" style="left:557px;top:384px;width:1px;height:16px;background:#c0c0c0;"></div>
<div class="a" style="left:558px;top:384px;width:1px;height:16px;background:#ffffff;"></div>
<div class="t" style="top:386px;font-size:12px;line-height:13px;color:#000;letter-spacing:-0.668px;left:561px;transform:scaleX(0.9);transform-origin:0 0;">May</div>
<div class="a" style="left:614px;top:384px;width:1px;height:16px;background:#c0c0c0;"></div>
<div class="a" style="left:615px;top:384px;width:1px;height:16px;background:#ffffff;"></div>
<div class="t" style="top:386px;font-size:12px;line-height:13px;color:#000;letter-spacing:-0.264px;left:618px;transform:scaleX(0.9);transform-origin:0 0;">June</div>
<div class="a" style="left:671px;top:384px;width:1px;height:16px;background:#c0c0c0;"></div>
<div class="a" style="left:672px;top:384px;width:1px;height:16px;background:#ffffff;"></div>
<div class="t" style="top:386px;font-size:12px;line-height:13px;color:#000;letter-spacing:-0.447px;left:675px;transform:scaleX(0.9);transform-origin:0 0;">July</div>
<div class="a" style="left:728px;top:384px;width:1px;height:16px;background:#c0c0c0;"></div>
<div class="a" style="left:729px;top:384px;width:1px;height:16px;background:#ffffff;"></div>
<div class="t" style="top:386px;font-size:12px;line-height:13px;color:#000;letter-spacing:-0.282px;left:732px;transform:scaleX(0.9);transform-origin:0 0;">Agust</div>
<div class="a" style="left:785px;top:384px;width:1px;height:16px;background:#c0c0c0;"></div>
<div class="a" style="left:786px;top:384px;width:1px;height:16px;background:#ffffff;"></div>
<div class="t" style="top:386px;font-size:12px;line-height:13px;color:#000;letter-spacing:-0.296px;left:789px;transform:scaleX(0.9);transform-origin:0 0;">September</div>
<div class="a" style="left:842px;top:384px;width:1px;height:16px;background:#c0c0c0;"></div>
<div class="a" style="left:843px;top:384px;width:1px;height:16px;background:#ffffff;"></div>
<div class="t" style="top:386px;font-size:12px;line-height:13px;color:#000;letter-spacing:-0.152px;left:846px;transform:scaleX(0.9);transform-origin:0 0;">October</div>
<div class="a" style="left:899px;top:384px;width:1px;height:16px;background:#c0c0c0;"></div>
<div class="a" style="left:900px;top:384px;width:1px;height:16px;background:#ffffff;"></div>
<div class="t" style="top:386px;font-size:12px;line-height:13px;color:#000;letter-spacing:-0.099px;left:903px;transform:scaleX(0.9);transform-origin:0 0;">November</div>
<div class="a" style="left:956px;top:384px;width:1px;height:16px;background:#c0c0c0;"></div>
<div class="a" style="left:957px;top:384px;width:1px;height:16px;background:#ffffff;"></div>
<div class="t" style="top:386px;font-size:12px;line-height:13px;color:#000;letter-spacing:-0.226px;left:960px;transform:scaleX(0.9);transform-origin:0 0;">December</div>
<div class="a" style="left:1013px;top:384px;width:1px;height:16px;background:#c0c0c0;"></div>
<div class="a" style="left:1014px;top:384px;width:1px;height:16px;background:#ffffff;"></div>
<div class="t" style="top:386px;font-size:12px;line-height:13px;color:#000;letter-spacing:0.000px;left:1017px;transform:scaleX(0.9);transform-origin:0 0;">To</div>
<div class="a" style="left:1028px;top:364px;width:1px;height:144px;background:#f0f0f0;"></div>
<div class="a" style="left:13px;top:401px;width:1015px;height:66px;background:#ffffff;"></div>
<div class="t" style="top:428px;font-size:12px;line-height:13px;color:#5a5a5a;letter-spacing:-0.190px;left:226px;width:600px;text-align:center;transform:scaleX(0.9);transform-origin:50% 0;">&lt;No price to display for this search criterias&gt;</div>
<div class="a" style="left:13px;top:467px;width:1015px;height:1px;background:#a0a0a0;"></div>
<div class="a" style="left:13px;top:468px;width:1015px;height:22px;background:#f0f0f0;"></div>
<div class="a" style="left:25px;top:469px;width:1px;height:21px;background:#a0a0a0;"></div>
<div class="a" style="left:27px;top:469px;width:305px;height:20px;box-sizing:border-box;border-top:1px solid #fff;border-left:1px solid #fff"></div>
<div class="a" style="left:28px;top:470px;width:303px;height:19px;box-sizing:border-box;border-top:1px solid #a0a0a0;border-left:1px solid #a0a0a0;border-right:1px solid #fff;border-bottom:1px solid #fff"></div>
<div class="t" style="top:474px;font-size:12px;line-height:13px;color:#000;letter-spacing:-0.279px;left:34px;transform:scaleX(0.9);transform-origin:0 0;">Items</div>
<div class="a" style="left:331px;top:470px;width:55px;height:19px;box-sizing:border-box;border-top:1px solid #a0a0a0;border-left:1px solid #a0a0a0;border-right:1px solid #fff;border-bottom:1px solid #fff"></div>
<div class="a" style="left:388px;top:470px;width:55px;height:19px;box-sizing:border-box;border-top:1px solid #a0a0a0;border-left:1px solid #a0a0a0;border-right:1px solid #fff;border-bottom:1px solid #fff"></div>
<div class="a" style="left:445px;top:470px;width:55px;height:19px;box-sizing:border-box;border-top:1px solid #a0a0a0;border-left:1px solid #a0a0a0;border-right:1px solid #fff;border-bottom:1px solid #fff"></div>
<div class="a" style="left:502px;top:470px;width:55px;height:19px;box-sizing:border-box;border-top:1px solid #a0a0a0;border-left:1px solid #a0a0a0;border-right:1px solid #fff;border-bottom:1px solid #fff"></div>
<div class="a" style="left:559px;top:470px;width:55px;height:19px;box-sizing:border-box;border-top:1px solid #a0a0a0;border-left:1px solid #a0a0a0;border-right:1px solid #fff;border-bottom:1px solid #fff"></div>
<div class="a" style="left:616px;top:470px;width:55px;height:19px;box-sizing:border-box;border-top:1px solid #a0a0a0;border-left:1px solid #a0a0a0;border-right:1px solid #fff;border-bottom:1px solid #fff"></div>
<div class="a" style="left:673px;top:470px;width:55px;height:19px;box-sizing:border-box;border-top:1px solid #a0a0a0;border-left:1px solid #a0a0a0;border-right:1px solid #fff;border-bottom:1px solid #fff"></div>
<div class="a" style="left:730px;top:470px;width:55px;height:19px;box-sizing:border-box;border-top:1px solid #a0a0a0;border-left:1px solid #a0a0a0;border-right:1px solid #fff;border-bottom:1px solid #fff"></div>
<div class="a" style="left:787px;top:470px;width:55px;height:19px;box-sizing:border-box;border-top:1px solid #a0a0a0;border-left:1px solid #a0a0a0;border-right:1px solid #fff;border-bottom:1px solid #fff"></div>
<div class="a" style="left:844px;top:470px;width:55px;height:19px;box-sizing:border-box;border-top:1px solid #a0a0a0;border-left:1px solid #a0a0a0;border-right:1px solid #fff;border-bottom:1px solid #fff"></div>
<div class="a" style="left:901px;top:470px;width:55px;height:19px;box-sizing:border-box;border-top:1px solid #a0a0a0;border-left:1px solid #a0a0a0;border-right:1px solid #fff;border-bottom:1px solid #fff"></div>
<div class="a" style="left:958px;top:470px;width:55px;height:19px;box-sizing:border-box;border-top:1px solid #a0a0a0;border-left:1px solid #a0a0a0;border-right:1px solid #fff;border-bottom:1px solid #fff"></div>
<div class="a" style="left:1015px;top:470px;width:13px;height:19px;box-sizing:border-box;border-top:1px solid #a0a0a0;border-left:1px solid #a0a0a0;border-right:1px solid #fff;border-bottom:1px solid #fff"></div>
<div class="a" style="left:1028px;top:468px;width:1px;height:40px;background:#f0f0f0;"></div>
<div class="a" style="left:13px;top:490px;width:1015px;height:1px;background:#a0a0a0;"></div>
<div class="a" style="left:13px;top:491px;width:1015px;height:16px;background:#f0f0f0;"></div>
<div class="a" style="left:919px;top:491px;width:92px;height:16px;background:repeating-conic-gradient(#ffffff 0 25%,#ebebeb 0 50%) 0 0/2px 2px"></div>
<div class="a" style="left:13px;top:491px;width:18px;height:16px;box-sizing:border-box;border-right:1px solid #a0a0a0;background:#f0f0f0"></div>
<svg class="a" style="left:20px;top:495px" width="6" height="9" viewBox="0 0 6 9"><path d="M4.5 0.5 L4.5 8.5 L0.5 4.5 Z" fill="#000"/></svg>
<div class="a" style="left:31px;top:491px;width:888px;height:16px;box-sizing:border-box;border-right:1px solid #a0a0a0;background:#f0f0f0"></div>
<div class="a" style="left:1011px;top:491px;width:17px;height:16px;box-sizing:border-box;border-right:1px solid #a0a0a0;background:#f0f0f0"></div>
<svg class="a" style="left:1017px;top:495px" width="6" height="9" viewBox="0 0 6 9"><path d="M0.5 0.5 L0.5 8.5 L4.5 4.5 Z" fill="#000"/></svg>
<div class="a" style="left:13px;top:507px;width:1016px;height:1px;background:#a0a0a0;"></div>
<div class="a" style="left:13px;top:508px;width:1016px;height:10px;background:#f0f0f0;"></div>
<div class="a" style="left:13px;top:517px;width:1016px;height:1px;background:#a0a0a0;"></div>
<div class="a" style="left:369px;top:509px;width:305px;height:9px;box-sizing:border-box;background:#f8f8f8;border-top:1px solid #a0a0a0;border-left:1px solid #a0a0a0;border-right:1px solid #a0a0a0;border-bottom:2px solid #a8a8a8"></div>
<svg class="a" style="left:375px;top:511px" width="8" height="5" viewBox="0 0 8 5"><path d="M0.8 0.8 L4 4 L7.2 0.8" stroke="#000" stroke-width="1.7" fill="none"/></svg>
<svg class="a" style="left:662px;top:511px" width="8" height="5" viewBox="0 0 8 5"><path d="M0.8 0.8 L4 4 L7.2 0.8" stroke="#000" stroke-width="1.7" fill="none"/></svg>
<div class="a" style="left:385px;top:513px;width:272px;height:1px;background-image:repeating-linear-gradient(90deg,#3c88d0 0 1px,#c8f0f8 1px 2px,transparent 2px 3px)"></div>
<div class="a" style="left:13px;top:518px;width:1016px;height:130px;background:#ffffff;"></div>
<div class="a" style="left:24px;top:593px;width:994px;height:44px;background:#ffffe1;border:1px solid #e00000;"></div>
<div class="t" style="top:609px;font-size:12px;line-height:13px;color:#d00000;letter-spacing:-0.049px;left:32px;transform:scaleX(0.9);transform-origin:0 0;">Data Levels:</div>
<div class="a" style="left:99px;top:605px;width:40px;height:19px;background:#3399ff;border:1px solid #a0a0a0;"></div>
<div class="t" style="top:609px;font-size:12px;line-height:13px;color:#fff;letter-spacing:0.094px;left:104px;transform:scaleX(0.9);transform-origin:0 0;">Month</div>
<div class="a" style="left:139px;top:614px;width:6px;height:1px;background:#a0a0a0;"></div>
<div class="a" style="left:144px;top:605px;width:33px;height:19px;background:#ffffe1;border:1px solid #a0a0a0;"></div>
<div class="t" style="top:609px;font-size:12px;line-height:13px;color:#d00000;letter-spacing:-0.039px;left:149px;transform:scaleX(0.9);transform-origin:0 0;">Data</div>
<div class="a" style="left:798px;top:596px;width:1px;height:38px;background-image:repeating-linear-gradient(180deg,#a8a8a8 0 2px,transparent 2px 4px)"></div>
<div class="a" style="left:893px;top:596px;width:1px;height:38px;background-image:repeating-linear-gradient(180deg,#a8a8a8 0 2px,transparent 2px 4px)"></div>
<div class="a" style="left:804px;top:604px;width:84px;height:21px;box-sizing:border-box;background:linear-gradient(#f4f4f4,#e6e6e6);border-top:1px solid #fff;border-left:1px solid #fff;border-right:1px solid #a0a0a0;border-bottom:1px solid #a0a0a0;box-shadow:1px 1px 0 #d8d8d8"></div>
<div class="t" style="top:608px;font-size:12px;line-height:13px;color:#000;letter-spacing:-0.423px;left:808px;transform:scaleX(0.9);transform-origin:0 0;">Customize Chart</div>
<div class="a" style="left:899px;top:599px;width:32px;height:32px;box-sizing:border-box;background:linear-gradient(#ffffff,#e4e4e4);border:1px solid #909090;box-shadow:inset -1px -1px 0 #606060"></div>
<svg class="a" style="left:901px;top:601px" width="28" height="28" viewBox="0 0 28 28">
<rect x="3" y="16" width="5" height="10" rx="1" fill="#e8502a" stroke="#b03010" stroke-width="0.6"/>
<rect x="11" y="9" width="5" height="17" rx="1" fill="#e0d848" stroke="#a8a020" stroke-width="0.6"/>
<rect x="19" y="2" width="5" height="24" rx="1" fill="#80b050" stroke="#508030" stroke-width="0.6"/>
<rect x="2" y="26" width="24" height="1" fill="#a0a0a0"/>
</svg>
<div class="t" style="top:609px;font-size:12px;line-height:13px;color:#0000cc;letter-spacing:-0.388px;left:935px;transform:scaleX(0.9);transform-origin:0 0;">Column diagram</div>
<div class="a" style="left:935px;top:620px;width:75px;height:1px;background:#0000cc;"></div>
<div class="a" style="left:337px;top:651px;width:90px;height:22px;box-sizing:border-box;background:#f0f0f0;border-top:1px solid #fff;border-left:1px solid #fff;border-right:1px solid #a0a0a0;border-bottom:1px solid #a0a0a0;box-shadow:1px 1px 0 #e0e0e0"></div>
<div class="a" style="left:411px;top:653px;width:1px;height:18px;background:#a0a0a0;"></div>
<div class="a" style="left:412px;top:653px;width:1px;height:18px;background:#ffffff;"></div>
<svg class="a" style="left:348px;top:654px" width="18" height="16" viewBox="0 0 18 16" shape-rendering="crispEdges">
<rect x="5" y="1" width="10" height="1" fill="#000"/>
<polygon points="5,2 15,2 14,6 3,6" fill="#fff"/>
<rect x="4" y="2" width="1" height="2" fill="#000"/><rect x="3" y="4" width="1" height="2" fill="#000"/>
<rect x="14" y="2" width="1" height="2" fill="#000"/>
<rect x="6" y="3" width="6" height="1" fill="#000"/><rect x="5" y="5" width="6" height="1" fill="#000"/>
<rect x="2" y="6" width="15" height="9" fill="#000"/>
<rect x="1" y="8" width="1" height="6" fill="#000"/>
<rect x="3" y="10" width="11" height="2" fill="#fff"/>
<rect x="8" y="11" width="5" height="1" fill="#f0e000"/>
<rect x="4" y="13" width="10" height="1" fill="#fff"/>
<rect x="15" y="9" width="1" height="1" fill="#fff"/><rect x="16" y="11" width="1" height="1" fill="#fff"/><rect x="15" y="13" width="1" height="1" fill="#fff"/><rect x="3" y="7" width="12" height="1" fill="#fff"/>
</svg>
<div class="t" style="top:656px;font-size:12px;line-height:13px;color:#000;letter-spacing:-0.226px;left:370px;transform:scaleX(0.9);transform-origin:0 0;">Report</div>
<div class="a" style="left:370px;top:667px;width:8px;height:1px;background:#000;"></div>
<svg class="a" style="left:415px;top:659px" width="9" height="6" viewBox="0 0 9 6"><path d="M0.5 0.5 L8.5 0.5 L4.5 4.5 Z" fill="#000"/></svg>
<div class="a" style="left:438px;top:651px;width:90px;height:22px;box-sizing:border-box;background:#f0f0f0;border-top:1px solid #fff;border-left:1px solid #fff;border-right:1px solid #a0a0a0;border-bottom:1px solid #a0a0a0;box-shadow:1px 1px 0 #e0e0e0"></div>
<svg class="a" style="left:459px;top:653px" width="18" height="18" viewBox="0 0 18 18" shape-rendering="crispEdges">
<rect x="6" y="0" width="6" height="3" fill="#000"/><rect x="7" y="1" width="4" height="1" fill="#00e000"/>
<rect x="4" y="4" width="10" height="13" fill="#000080"/>
<rect x="5" y="5" width="3" height="11" fill="#c000c0"/>
<rect x="8" y="5" width="1" height="11" fill="#000"/>
<rect x="9" y="5" width="4" height="8" fill="#60e8f0"/>
<rect x="9" y="13" width="4" height="3" fill="#fff"/>
<rect x="0" y="16" width="18" height="1" fill="#000080"/>
</svg>
<div class="t" style="top:656px;font-size:12px;line-height:13px;color:#000;letter-spacing:-0.585px;left:481px;transform:scaleX(0.9);transform-origin:0 0;">Close</div>
<div class="a" style="left:481px;top:667px;width:8px;height:1px;background:#000;"></div>
<div class="t" style="top:682px;font-size:12px;line-height:14px;color:#fff;letter-spacing:0.000px;left:211px;">Создание</div>
<div class="t" style="top:682px;font-size:12px;line-height:14px;color:#fff;letter-spacing:-0.500px;left:284px;">ST017744</div>
</body></html>
